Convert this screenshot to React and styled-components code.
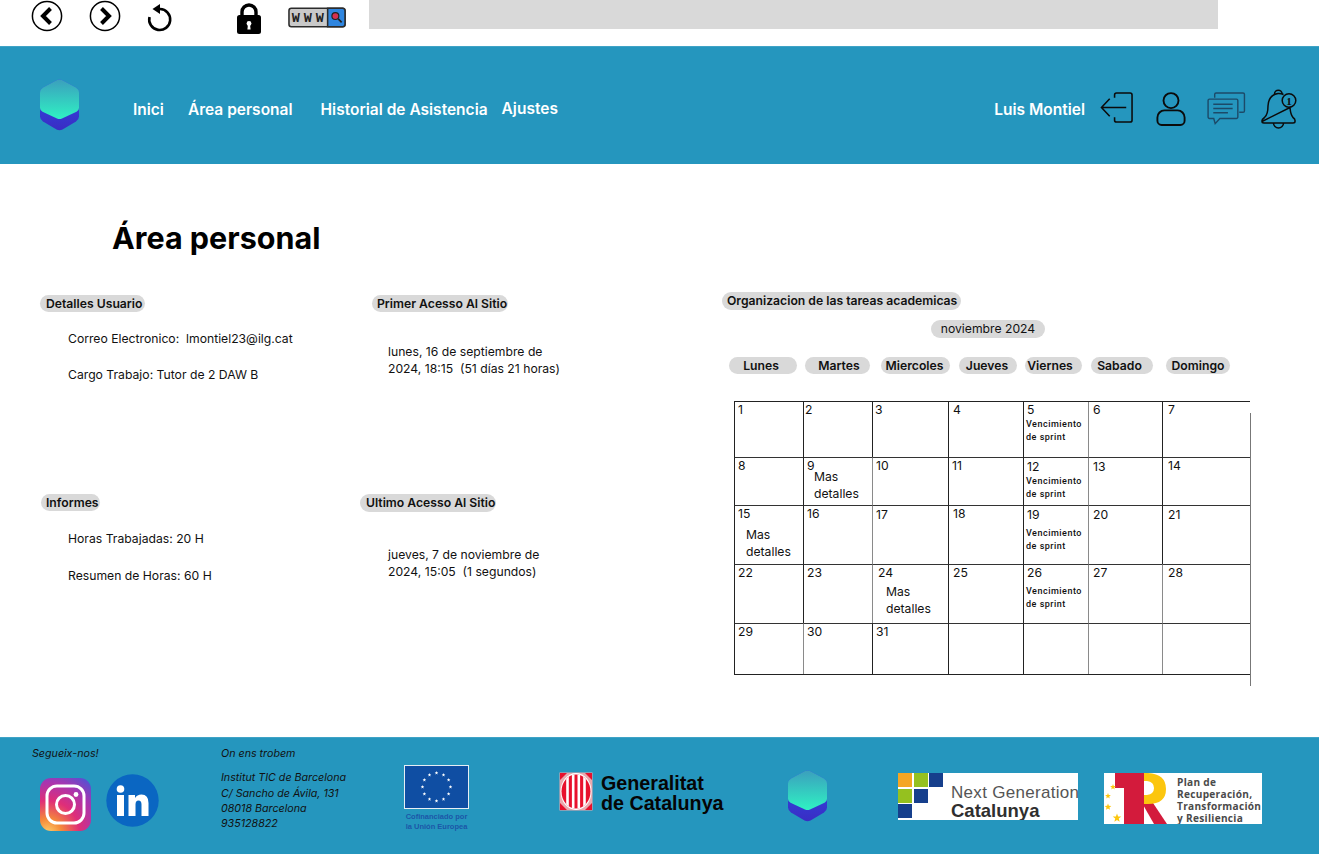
import React from "react";
import styled, { createGlobalStyle } from "styled-components";

const GlobalStyle = createGlobalStyle`
  html, body {
    margin: 0;
    padding: 0;
    background: #fff;
    font-family: Inter, "Liberation Sans", sans-serif;
    color: #111;
  }
`;

const BLUE = "#2596be";
const PILL = "#d9d9d9";

const Logo = ({ id }) => (
  <svg width="39" height="52" viewBox="0 0 39 52">
    <defs>
      <linearGradient id={`${id}a`} x1="0" y1="0" x2="0" y2="1">
        <stop offset="0" stopColor="#3b9fbd" />
        <stop offset="1" stopColor="#2ff2c3" />
      </linearGradient>
      <linearGradient id={`${id}b`} x1="0" y1="0" x2="0" y2="1">
        <stop offset="0" stopColor="#2b52e8" />
        <stop offset="1" stopColor="#3a2cc4" />
      </linearGradient>
    </defs>
    <path d="M16.5 1.2 Q19.5 -.4 22.5 1.2 L36 8.6 Q39 10.4 39 13.5 L39 37.5 Q39 40.6 36 42.4 L22.5 50.4 Q19.5 52 16.5 50.4 L3 42.4 Q0 40.6 0 37.5 L0 13.5 Q0 10.4 3 8.6Z" fill={`url(#${id}b)`} />
    <path d="M16.5 1.2 Q19.5 -.4 22.5 1.2 L36 8.6 Q39 10.4 39 13.5 L39 29 Q39 31.5 36.5 32.8 L22 39.6 Q19.5 40.6 17 39.6 L2.5 32.8 Q0 31.5 0 29 L0 13.5 Q0 10.4 3 8.6Z" fill={`url(#${id}a)`} />
  </svg>
);

const CircleArrow = ({ right }) => (
  <svg width="32" height="32" viewBox="0 0 32 32">
    <circle cx="16" cy="16" r="14.6" fill="#fff" stroke="#000" strokeWidth="1.5" />
    <path d={right ? "M12.5 8.5 L20 16 L12.5 23.5" : "M19.5 8.5 L12 16 L19.5 23.5"} fill="none" stroke="#000" strokeWidth="4" />
  </svg>
);

const ReloadIcon = () => (
  <svg width="26" height="30" viewBox="0 0 26 30">
    <path d="M3.5 15 A10.5 10.5 0 1 0 14 7" fill="none" stroke="#000" strokeWidth="2.6" />
    <path d="M6.5 7 L14 2 L14 12Z" fill="#000" />
  </svg>
);

const LockIcon = () => (
  <svg width="26" height="32" viewBox="0 0 26 32">
    <path d="M6 15 V10 a7 7 0 0 1 14 0 V15" fill="none" stroke="#000" strokeWidth="3.4" />
    <rect x="1" y="13" width="24" height="19" rx="2.5" fill="#000" />
    <circle cx="13" cy="21.5" r="2.4" fill="#fff" />
    <path d="M12 22 H14 L14.6 27.5 H11.4Z" fill="#fff" />
  </svg>
);

const WwwIcon = () => (
  <svg width="58" height="21" viewBox="0 0 60 21">
    <rect x="1" y="1" width="58" height="19" rx="2.5" fill="#c9c9c9" stroke="#2c2c2c" strokeWidth="1.6" />
    <path d="M41 1 H56.5 a2.5 2.5 0 0 1 2.5 2.5 V17.5 a2.5 2.5 0 0 1 -2.5 2.5 H41Z" fill="#2f86e0" stroke="#2c2c2c" strokeWidth="1.6" />
    <text x="20.5" y="15.5" textAnchor="middle" fontFamily="Liberation Mono, monospace" fontWeight="700" fontSize="14" fill="#222" textLength="33">WWW</text>
    <circle cx="49" cy="9" r="3.6" fill="#d6304f" stroke="#222" strokeWidth="1.2" />
    <path d="M52 12 L55.5 15.5" stroke="#222" strokeWidth="1.8" />
  </svg>
);

const ExitIcon = () => (
  <svg width="34" height="33" viewBox="0 0 35 34">
    <path d="M15 6 V3 a2 2 0 0 1 2 -2 H31 a2 2 0 0 1 2 2 V29 a2 2 0 0 1 -2 2 H17 a2 2 0 0 1 -2 -2 V26" fill="none" stroke="#0b0b0b" strokeWidth="1.6" />
    <path d="M27 16 H2 M10 7 L1.5 16 L10 25" fill="none" stroke="#0b0b0b" strokeWidth="1.6" />
  </svg>
);

const UserIcon = () => (
  <svg width="30" height="36" viewBox="0 0 32 37">
    <circle cx="16" cy="9.5" r="8" fill="none" stroke="#0b0b0b" strokeWidth="2" />
    <path d="M9 20 H23 a7.5 7.5 0 0 1 7.5 7.5 V31 a4.5 4.5 0 0 1 -4.5 4.5 H6 a4.5 4.5 0 0 1 -4.5 -4.5 V27.5 A7.5 7.5 0 0 1 9 20Z" fill="none" stroke="#0b0b0b" strokeWidth="2" />
  </svg>
);

const ChatIcon = () => (
  <svg width="39" height="34" viewBox="0 0 41 36">
    <path d="M8 6 V2.5 a1.5 1.5 0 0 1 1.5 -1.5 H38 a1.5 1.5 0 0 1 1.5 1.5 V20 a1.5 1.5 0 0 1 -1.5 1.5 H34" fill="none" stroke="#1c4a68" strokeWidth="1.5" />
    <path d="M2.5 7.5 H31 a1.5 1.5 0 0 1 1.5 1.5 V26.5 a1.5 1.5 0 0 1 -1.5 1.5 H13.5 L8.5 33.5 L7 28 H2.5 A1.5 1.5 0 0 1 1 26.5 V9 a1.5 1.5 0 0 1 1.5 -1.5Z" fill="none" stroke="#1c4a68" strokeWidth="1.5" />
    <path d="M6.5 13 H27 M6.5 17.5 H27 M6.5 22 H22" stroke="#1c4a68" strokeWidth="1.5" />
  </svg>
);

const BellIcon = () => (
  <svg width="36" height="42" viewBox="0 0 36 42">
    <path d="M13.5 6 a3.8 3.8 0 0 1 7.6 0" fill="none" stroke="#0b0b0b" strokeWidth="1.5" />
    <path d="M1 33.5 Q1 31 3.5 29.5 Q7 26.5 7 18 Q7.5 7 17 5.5 Q20 5.3 22.5 6.5 M29 19.5 Q29.5 26.5 32 29.5 Q34.5 31 34 33.5 Q34 35 32 35 H3 Q1 35 1 33.5Z" fill="none" stroke="#0b0b0b" strokeWidth="1.5" />
    <path d="M12.5 35 a5 5 0 0 0 10 0" fill="none" stroke="#0b0b0b" strokeWidth="1.5" />
    <circle cx="28" cy="12.5" r="6.8" fill="none" stroke="#0b0b0b" strokeWidth="1.5" />
    <text x="28" y="16.5" textAnchor="middle" fontFamily="Liberation Serif, serif" fontWeight="700" fontSize="11" fill="#0b0b0b">1</text>
  </svg>
);

const InstagramIcon = () => (
  <svg width="51" height="53" viewBox="0 0 51 53">
    <defs>
      <radialGradient id="ig" cx="0.15" cy="1.05" r="1.25">
        <stop offset="0" stopColor="#fdd26d" />
        <stop offset="0.22" stopColor="#f58a3a" />
        <stop offset="0.5" stopColor="#df2e78" />
        <stop offset="0.78" stopColor="#a835b0" />
        <stop offset="1" stopColor="#5b4fd0" />
      </radialGradient>
    </defs>
    <rect width="51" height="53" rx="11" fill="url(#ig)" />
    <rect x="7" y="8" width="37" height="37" rx="10" fill="none" stroke="#fff" strokeWidth="3" />
    <circle cx="25.5" cy="26.5" r="9" fill="none" stroke="#fff" strokeWidth="3" />
    <circle cx="36" cy="16.5" r="2.4" fill="#fff" />
  </svg>
);

const LinkedinIcon = () => (
  <svg width="53" height="53" viewBox="0 0 53 53">
    <circle cx="26.5" cy="26.5" r="26.2" fill="#0a66c2" />
    <circle cx="14.5" cy="15" r="3.8" fill="#fff" />
    <rect x="11" y="21" width="7" height="21" fill="#fff" />
    <path d="M22.5 21 H29 V24 Q31 20.5 35.5 20.5 Q42.5 20.5 42.5 29 V42 H35.5 V30.5 Q35.5 26.5 32.5 26.5 Q29.5 26.5 29.5 30.5 V42 H22.5Z" fill="#fff" />
  </svg>
);

const starPath = (x, y, r) => {
  const pts = Array.from({ length: 10 }, (_, i) => {
    const a = (i * Math.PI) / 5;
    const len = i % 2 ? r * 0.42 : r;
    return `${(x + len * Math.sin(a)).toFixed(2)} ${(y - len * Math.cos(a)).toFixed(2)}`;
  });
  return `M${pts.join(" L")}Z`;
};

const EuFlag = () => {
  const stars = Array.from({ length: 12 }, (_, i) => {
    const a = (i * Math.PI) / 6;
    return [32.5 + 14 * Math.sin(a), 22 - 14 * Math.cos(a)];
  });
  return (
    <svg width="65" height="44" viewBox="0 0 65 44">
      <rect x=".5" y=".5" width="64" height="43" fill="#0f4ea3" stroke="#e6eef4" />
      {stars.map(([x, y], i) => (
        <path key={i} d={starPath(x, y, 1.9)} fill="#fff" />
      ))}
    </svg>
  );
};

const GencatShield = () => (
  <svg width="34" height="39" viewBox="0 0 34 39">
    <rect x=".5" y=".5" width="33" height="38" fill="#e9a9ae" />
    <path d="M1 1 H8 L1 8Z M33 1 H26 L33 8Z M1 38 H8 L1 31Z M33 38 H26 L33 31Z" fill="#e8112d" />
    <ellipse cx="17" cy="19.5" rx="15.5" ry="18.5" fill="#fff" />
    <clipPath id="shieldClip">
      <ellipse cx="17" cy="19.5" rx="14.5" ry="17" />
    </clipPath>
    <g clipPath="url(#shieldClip)">
      <rect x="2" y="2" width="30" height="36" fill="#e8112d" />
      <path d="M8.5 2 V38 M14.2 2 V38 M19.8 2 V38 M25.5 2 V38" stroke="#fff" strokeWidth="2.6" />
    </g>
  </svg>
);

const TrMark = () => (
  <svg width="63" height="51" viewBox="0 0 63 51">
    <path d="M11 0 H40 V51 H20 V15 H11Z" fill="#d31b3c" />
    <path d="M38 30 H49 L63 51 H50Z" fill="#d31b3c" />
    <path d="M40 0 H44 Q62 1 62 16 Q62 31 44 31 H40 V22 H43 Q50 21 50 15 Q50 9 43 8 H40Z" fill="#fcc60e" />
    <path d={starPath(9, 14, 3)} fill="#fcc60e" />
    <path d={starPath(4, 23, 3)} fill="#fcc60e" />
    <path d={starPath(4, 34, 3.5)} fill="#fcc60e" />
    <path d={starPath(13, 45, 4.5)} fill="#fcc60e" />
  </svg>
);

const Page = styled.div`
  width: 1319px;
  height: 854px;
  display: flex;
  flex-direction: column;
  overflow: hidden;
`;

const TopBar = styled.div`
  height: 46px;
  display: flex;
  align-items: flex-start;
  background: #fff;
`;

const TopSlot = styled.div`
  width: ${(p) => p.$w}px;
  margin-left: ${(p) => p.$ml}px;
  margin-top: ${(p) => p.$mt}px;
  display: flex;
`;

const AddressBar = styled.div`
  width: 849px;
  height: 29px;
  margin-left: 23px;
  background: ${PILL};
`;

const Nav = styled.nav`
  height: 118px;
  background: ${BLUE};
  border-top: 1px solid #3fa3c6;
  box-sizing: border-box;
  display: flex;
  align-items: center;
  padding-left: 40px;
`;

const NavLogo = styled.span`
  display: flex;
  margin-top: -2px;
`;

const NavLink = styled.a`
  margin-left: ${(p) => p.$ml}px;
  margin-top: ${(p) => p.$mt}px;
  color: #fff;
  font-size: 15.5px;
  font-weight: 600;
  white-space: nowrap;
`;

const NavRight = styled.div`
  margin-left: auto;
  padding: 6px 22px 0 0;
  display: flex;
  align-items: center;
`;

const NavIcon = styled.span`
  margin-left: ${(p) => p.$ml}px;
  display: flex;
`;

const UserName = styled.span`
  margin-top: 2px;
  color: #fff;
  font-size: 15.5px;
  font-weight: 600;
  white-space: nowrap;
`;

const Main = styled.main`
  height: 573px;
  box-sizing: border-box;
  padding: 51px 0 0 40px;
`;

const Title = styled.h1`
  margin: 0 0 31px 72px;
  height: 46px;
  line-height: 46px;
  font-size: 30.5px;
  font-weight: 700;
  color: #000;
`;

const Content = styled.div`
  display: grid;
  grid-template-columns: 682px 1fr;
`;

const InfoGrid = styled.div`
  display: grid;
  grid-template-columns: 320px 1fr;
  grid-auto-rows: 199px;
`;

const Section = styled.section`
  margin-left: ${(p) => p.$ml || 0}px;
`;

const Pill = styled.div`
  display: inline-block;
  height: ${(p) => p.$h || 17}px;
  line-height: ${(p) => p.$h || 17}px;
  margin-left: ${(p) => p.$ml || 0}px;
  padding: 0 ${(p) => p.$pr}px 0 ${(p) => p.$pl}px;
  border-radius: 10px;
  background: ${PILL};
  font-size: 12.2px;
  font-weight: 600;
  white-space: nowrap;
  color: #111;
`;

const InfoLine = styled.p`
  margin: ${(p) => p.$mt}px 0 0 ${(p) => p.$ml}px;
  font-size: 12.2px;
  line-height: 18px;
  white-space: pre;
`;

const InfoBlock = styled.p`
  margin: ${(p) => p.$mt}px 0 0 ${(p) => p.$ml}px;
  font-size: 12.2px;
  line-height: 17px;
  white-space: pre;
`;

const CalendarCol = styled.div`
  display: flex;
  flex-direction: column;
  align-items: flex-start;
`;

const MonthPill = styled.div`
  margin: 10px 0 0 209px;
  width: 114px;
  height: 18px;
  line-height: 18px;
  text-align: center;
  border-radius: 10px;
  background: ${PILL};
  font-size: 12.2px;
`;

const WeekRow = styled.div`
  margin: 19px 0 0 7px;
  display: flex;
`;

const WeekPill = styled.div`
  box-sizing: border-box;
  width: ${(p) => p.$w}px;
  margin-left: ${(p) => p.$ml}px;
  padding: 0 ${(p) => p.$pr || 0}px 0 ${(p) => p.$pl || 0}px;
  height: 17px;
  line-height: 17px;
  text-align: center;
  border-radius: 10px;
  background: ${PILL};
  font-size: 12.2px;
  font-weight: 600;
`;

const Calendar = styled.div`
  position: relative;
  margin: 27px 0 0 12px;
  display: grid;
  grid-template-columns: 69px 69px 76px 75px 65px 74px 88px;
  grid-template-rows: 55px 48px 59px 59px 51px;
  width: 516px;
  border-bottom: 1px solid #222;
  border-top: 1px solid #222;

  &::after {
    content: "";
    position: absolute;
    right: -1px;
    top: 11px;
    bottom: -12px;
    width: 1.5px;
    background: #777;
  }
`;

const Cell = styled.div`
  position: relative;
  box-sizing: border-box;
  border-left: 1px solid ${(p) => (p.$soft ? "#8a8a8a" : "#222")};
  border-top: ${(p) => (p.$first ? "none" : "1px solid #333")};
  padding: ${(p) => p.$pt ?? 0}px 0 0 ${(p) => p.$pl ?? 3}px;
  font-size: 12.2px;
  line-height: 15px;
`;

const Sprint = styled.div`
  margin: ${(p) => p.$mt ?? 1}px 0 0 -1px;
  font-family: Roboto, sans-serif;
  font-weight: 500;
  font-size: 9px;
  line-height: 13px;
  letter-spacing: 0.5px;
  white-space: nowrap;
`;

const MoreInfo = styled.div`
  margin: ${(p) => p.$mt}px 0 0 ${(p) => p.$ml}px;
  font-size: 12.2px;
  line-height: 17px;
`;

const Footer = styled.footer`
  height: 117px;
  background: ${BLUE};
  border-top: 1px solid #3fa3c6;
  box-sizing: border-box;
  display: grid;
  grid-template-columns: 189px 183px 155px 229px 110px 206px 158px;
  padding-left: 32px;
`;

const FooterCol = styled.div`
  padding-top: ${(p) => p.$pt}px;
  display: flex;
  flex-direction: column;
  align-items: flex-start;
`;

const FooterNote = styled.div`
  font-size: 10.7px;
  font-style: italic;
  line-height: 15.3px;
  color: #111;
  margin-bottom: ${(p) => p.$mb || 0}px;
  white-space: nowrap;
`;

const SocialRow = styled.div`
  margin: 13px 0 0 8px;
  display: flex;
  align-items: flex-start;
  gap: 15px;
`;

const SocialLink = styled.a`
  display: flex;
  margin-top: ${(p) => p.$mt || 0}px;
`;

const EuCaption = styled.div`
  width: 65px;
  margin-top: 3px;
  text-align: center;
  font-family: "Liberation Sans", sans-serif;
  font-size: 7.5px;
  font-weight: 700;
  line-height: 9.5px;
  color: #1c57a8;
  white-space: nowrap;
`;

const GencatLogo = styled.div`
  display: flex;
  align-items: flex-start;
  gap: 8px;
`;

const GencatName = styled.div`
  margin-top: 1px;
  font-family: "Liberation Sans", sans-serif;
  font-weight: 700;
  font-size: 19.7px;
  line-height: 20px;
  color: #050505;
  white-space: nowrap;
`;

const NextGenCard = styled.div`
  width: 180px;
  height: 47px;
  background: #fff;
  display: flex;
  overflow: hidden;
`;

const NextGenSquares = styled.div`
  display: grid;
  grid-template-columns: repeat(3, 14px);
  grid-auto-rows: 14px;
  gap: 1.5px;
  width: 53px;
  flex: none;
`;

const Square = styled.span`
  background: ${(p) => p.$c};
`;

const NextGenText = styled.div`
  font-family: "Liberation Sans", sans-serif;
  font-size: 17px;
  line-height: 18px;
  color: #555;
  padding-top: 11px;
  white-space: nowrap;
  letter-spacing: 0.3px;
  b {
    color: #2f2f2f;
    font-size: 18.5px;
    letter-spacing: 0;
  }
`;

const TrCard = styled.div`
  width: 158px;
  height: 51px;
  background: #fff;
  display: flex;
  overflow: hidden;
`;

const TrText = styled.div`
  margin-left: 10px;
  padding-top: 3px;
  font-family: "Open Sans", sans-serif;
  font-weight: 700;
  font-size: 10.1px;
  line-height: 12px;
  letter-spacing: 0.3px;
  color: #4a4a4a;
  white-space: nowrap;
`;

const weekDays = [
  { name: "Lunes", w: 68, ml: 0, pr: 4 },
  { name: "Martes", w: 65, ml: 8, pl: 3 },
  { name: "Miercoles", w: 69, ml: 11, pr: 2 },
  { name: "Jueves", w: 58, ml: 9, pr: 2 },
  { name: "Viernes", w: 57, ml: 8, pr: 7 },
  { name: "Sabado", w: 62, ml: 9, pr: 5 },
  { name: "Domingo", w: 64, ml: 13 },
];

// numero del dia, nota y ajustes de cada celda
const days = [
  { n: 1 }, { n: 2, pl: 1 }, { n: 3, pl: 2 }, { n: 4, pl: 4 }, { n: 5, sprint: true }, { n: 6, pl: 4, soft: true }, { n: 7, pl: 5 },
  { n: 8 }, { n: 9, more: true, mt: -5, ml: 7 }, { n: 10, pl: 3, soft: true }, { n: 11, pl: 3 }, { n: 12, sprint: true, pt: 1 }, { n: 13, pl: 4, pt: 1, soft: true }, { n: 14, pl: 5 },
  { n: 15, more: true, mt: 5, ml: 8 }, { n: 16, pl: 3 }, { n: 17, pl: 3, pt: 1, soft: true }, { n: 18, pl: 4 }, { n: 19, sprint: true, pt: 1, smt: 5 }, { n: 20, pl: 4, pt: 1, soft: true }, { n: 21, pl: 5, pt: 1 },
  { n: 22 }, { n: 23, pl: 3 }, { n: 24, pl: 5, more: true, mt: 3, ml: 8, soft: true }, { n: 25, pl: 4 }, { n: 26, sprint: true, smt: 5 }, { n: 27, pl: 4, soft: true }, { n: 28, pl: 5, soft: true },
  { n: 29 }, { n: 30, pl: 3, soft: true }, { n: 31, pl: 3 }, {}, {}, { soft: true }, { soft: true },
];

const App = () => {
  return (
    <Page>
      <GlobalStyle />
      <TopBar>
        <TopSlot $w={32} $ml={31} $mt={0}><CircleArrow /></TopSlot>
        <TopSlot $w={32} $ml={26} $mt={0}><CircleArrow right /></TopSlot>
        <TopSlot $w={26} $ml={25} $mt={2}><ReloadIcon /></TopSlot>
        <TopSlot $w={26} $ml={64} $mt={2}><LockIcon /></TopSlot>
        <TopSlot $w={58} $ml={26} $mt={7}><WwwIcon /></TopSlot>
        <AddressBar />
      </TopBar>

      <Nav>
        <NavLogo><Logo id="navLogo" /></NavLogo>
        <NavLink $ml={54} $mt={8}>Inici</NavLink>
        <NavLink $ml={24} $mt={8}>Área personal</NavLink>
        <NavLink $ml={28} $mt={8}>Historial de Asistencia</NavLink>
        <NavLink $ml={14} $mt={6}>Ajustes</NavLink>
        <NavRight>
          <UserName>Luis Montiel</UserName>
          <NavIcon $ml={15}><ExitIcon /></NavIcon>
          <NavIcon $ml={22}><UserIcon /></NavIcon>
          <NavIcon $ml={21}><ChatIcon /></NavIcon>
          <NavIcon $ml={15}><BellIcon /></NavIcon>
        </NavRight>
      </Nav>

      <Main>
        <Title>Área personal</Title>
        <Content>
          <InfoGrid>
            <Section>
              <Pill $pl={6} $pr={3}>Detalles Usuario</Pill>
              <InfoLine $mt={18} $ml={28}>Correo Electronico:  lmontiel23@ilg.cat</InfoLine>
              <InfoLine $mt={18} $ml={28}>Cargo Trabajo: Tutor de 2 DAW B</InfoLine>
            </Section>
            <Section $ml={12}>
              <Pill $pl={5} $pr={1}>Primer Acesso Al Sitio</Pill>
              <InfoBlock $mt={31} $ml={16}>{"lunes, 16 de septiembre de\n2024, 18:15  (51 días 21 horas)"}</InfoBlock>
            </Section>
            <Section>
              <Pill $ml={1} $pl={5} $pr={1}>Informes</Pill>
              <InfoLine $mt={19} $ml={28}>Horas Trabajadas: 20 H</InfoLine>
              <InfoLine $mt={19} $ml={28}>Resumen de Horas: 60 H</InfoLine>
            </Section>
            <Section>
              <Pill $pl={6} $pr={1} $h={18}>Ultimo Acesso Al Sitio</Pill>
              <InfoBlock $mt={34} $ml={28}>{"jueves, 7 de noviembre de\n2024, 15:05  (1 segundos)"}</InfoBlock>
            </Section>
          </InfoGrid>

          <CalendarCol>
            <Pill $h={18} $pl={5} $pr={4}>Organizacion de las tareas academicas</Pill>
            <MonthPill>noviembre 2024</MonthPill>
            <WeekRow>
              {weekDays.map((d) => (
                <WeekPill key={d.name} $w={d.w} $ml={d.ml} $pl={d.pl} $pr={d.pr}>{d.name}</WeekPill>
              ))}
            </WeekRow>
            <Calendar>
              {days.map((d, idx) => (
                <Cell key={idx} $first={idx < 7} $soft={d.soft} $pl={d.pl} $pt={d.pt}>
                  {d.n}
                  {d.sprint && (
                    <Sprint $mt={d.smt}>Vencimiento<br />de sprint</Sprint>
                  )}
                  {d.more && (
                    <MoreInfo $mt={d.mt} $ml={d.ml}>Mas<br />detalles</MoreInfo>
                  )}
                </Cell>
              ))}
            </Calendar>
          </CalendarCol>
        </Content>
      </Main>

      <Footer>
        <FooterCol $pt={8}>
          <FooterNote>Segueix-nos!</FooterNote>
          <SocialRow>
            <SocialLink $mt={4}><InstagramIcon /></SocialLink>
            <SocialLink><LinkedinIcon /></SocialLink>
          </SocialRow>
        </FooterCol>
        <FooterCol $pt={8}>
          <FooterNote $mb={9}>On ens trobem</FooterNote>
          <FooterNote>Institut TIC de Barcelona</FooterNote>
          <FooterNote>C/ Sancho de Ávila, 131</FooterNote>
          <FooterNote>08018 Barcelona</FooterNote>
          <FooterNote>935128822</FooterNote>
        </FooterCol>
        <FooterCol $pt={27}>
          <EuFlag />
          <EuCaption>Cofinanciado por<br />la Unión Europea</EuCaption>
        </FooterCol>
        <FooterCol $pt={34}>
          <GencatLogo>
            <GencatShield />
            <GencatName>Generalitat<br />de Catalunya</GencatName>
          </GencatLogo>
        </FooterCol>
        <FooterCol $pt={32}>
          <Logo id="footLogo" />
        </FooterCol>
        <FooterCol $pt={35}>
          <NextGenCard>
            <NextGenSquares>
              <Square $c="#f5a623" />
              <Square $c="#95c11f" />
              <Square $c="#163f8c" />
              <Square $c="#95c11f" />
              <Square $c="#163f8c" />
              <span />
              <Square $c="#163f8c" />
            </NextGenSquares>
            <NextGenText>Next Generation<br /><b>Catalunya</b></NextGenText>
          </NextGenCard>
        </FooterCol>
        <FooterCol $pt={35}>
          <TrCard>
            <TrMark />
            <TrText>Plan de<br />Recuperación,<br />Transformación<br />y Resiliencia</TrText>
          </TrCard>
        </FooterCol>
      </Footer>
    </Page>
  );
};

export default App;
